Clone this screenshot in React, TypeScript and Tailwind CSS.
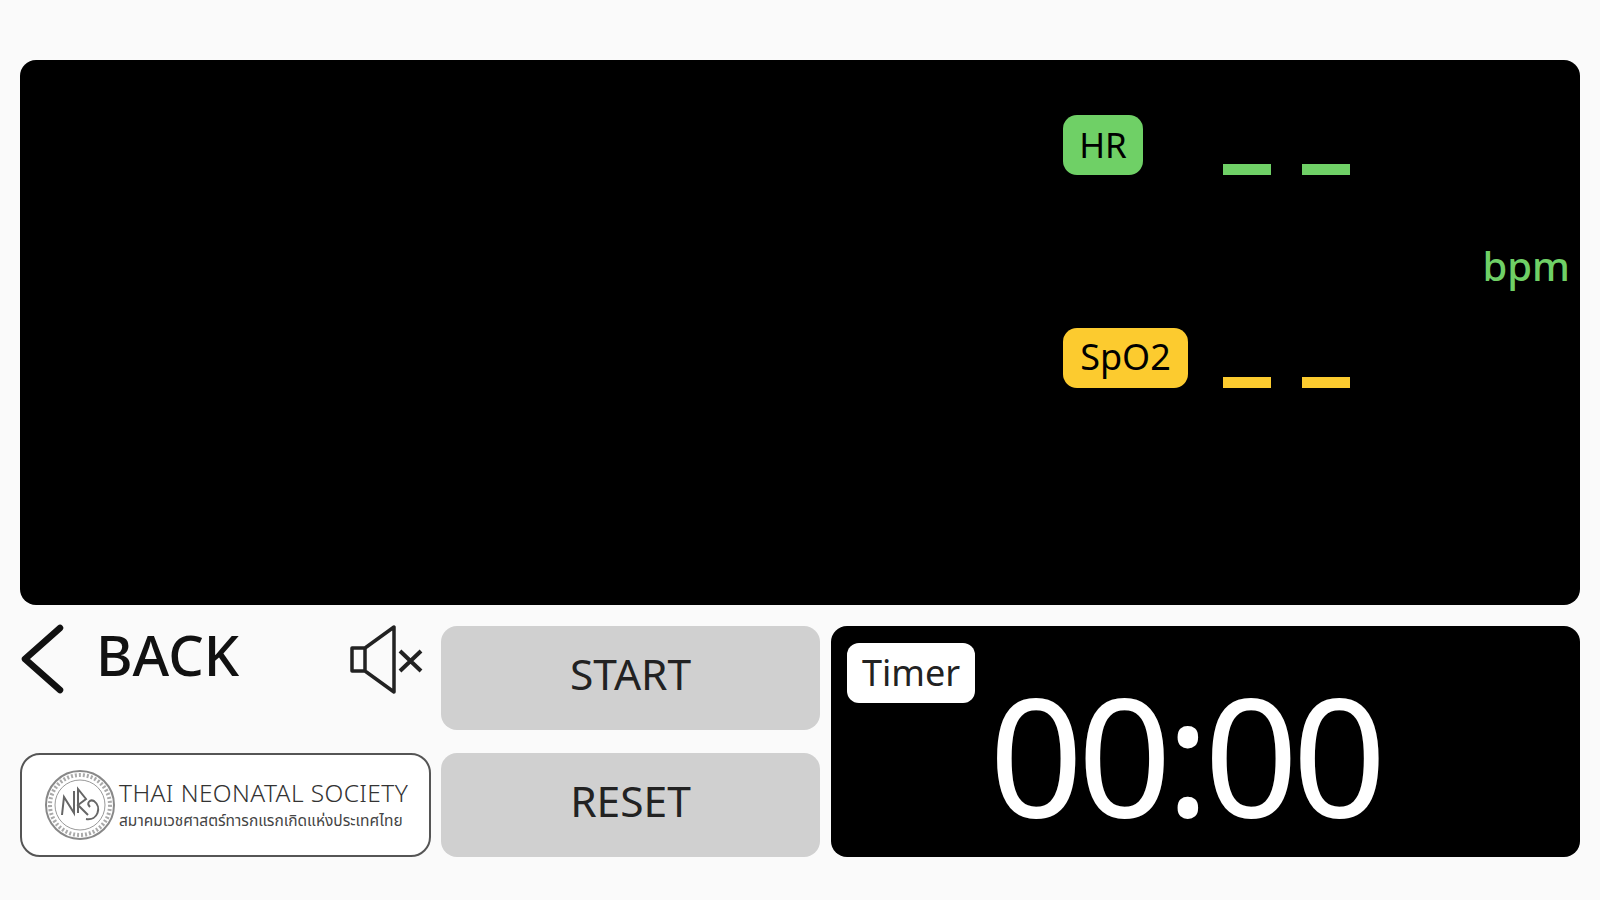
export default function App() {
  const font = { fontFamily: '"Noto Sans", "Noto Sans Thai", "Open Sans", sans-serif' };
  const Dashes = ({ c }: { c: string }) => (
    <div className="flex gap-[31px]">
      <div className={`w-[48px] h-[11px] ${c}`} />
      <div className={`w-[48px] h-[11px] ${c}`} />
    </div>
  );
  return (
    <div style={font} className="w-[1600px] h-[900px] bg-[#fafafa] px-5 pt-[60px] overflow-hidden">
      <div className="h-[545px] bg-black rounded-[16px] flex justify-end">
        <div className="w-[517px] pt-[55px] flex flex-col">
          <div className="flex items-end h-[60px]">
            <div className="w-[160px] shrink-0">
              <div className="w-[80px] h-[60px] rounded-[14px] bg-[#6fd066] text-black text-[35px] flex items-center justify-center leading-none pb-[2px]">HR</div>
            </div>
            <Dashes c="bg-[#6fd066]" />
          </div>
          <div className="h-[153px] flex items-center justify-end pr-[10px] text-[#6fd066] text-[40px] font-medium leading-none pt-[28px]">bpm</div>
          <div className="flex items-end h-[60px]">
            <div className="w-[160px] shrink-0">
              <div className="w-[125px] h-[60px] rounded-[14px] bg-[#fccb2f] text-black text-[36px] flex items-center justify-center leading-none pb-[2px]">SpO2</div>
            </div>
            <Dashes c="bg-[#fccb2f]" />
          </div>
        </div>
      </div>
      <div className="mt-[21px] h-[231px] flex gap-[10px]">
        <div className="w-[411px] flex flex-col justify-between">
          <div className="flex items-start h-[70px]">
            <svg width="46" height="72" viewBox="0 0 46 72" className="-mt-[3px] -ml-[1px] shrink-0">
              <path d="M41 5 L6 36 L41 67" fill="none" stroke="#111" strokeWidth="6.5" strokeLinecap="round" strokeLinejoin="round" />
            </svg>
            <div className="ml-[31px] text-[56px] font-medium leading-none text-[#111]">BACK</div>
            <svg width="74" height="70" viewBox="0 0 74 70" className="ml-auto mr-[7px] -mt-[1px] shrink-0">
              <path d="M2 23 H15 V46 H2 Z M15 23 L44 2 V67 L15 46" fill="none" stroke="#222" strokeWidth="3.5" strokeLinejoin="round" />
              <path d="M50 26 L71 46 M71 26 L50 46" fill="none" stroke="#222" strokeWidth="4" />
            </svg>
          </div>
          <div className="h-[104px] bg-white border-2 border-[#555] rounded-[20px] flex items-center pl-[22px] pr-[20px] gap-[3px]">
            <svg width="72" height="72" viewBox="0 0 72 72" className="shrink-0">
              <circle cx="36" cy="36" r="34" fill="none" stroke="#888" strokeWidth="2" />
              <circle cx="36" cy="36" r="30" fill="none" stroke="#aaa" strokeWidth="4" strokeDasharray="2 2" />
              <circle cx="36" cy="36" r="25" fill="none" stroke="#999" strokeWidth="1" />
              <path d="M18 46 L20 28 L30 44 L30 22 M34 44 L34 20 L42 30 L34 36 L44 46 M42 50 C54 52 58 38 50 32 C46 30 42 34 46 38" fill="none" stroke="#666" strokeWidth="2" />
            </svg>
            <div className="flex flex-col min-w-0 flex-1">
              <div className="text-[24.5px] leading-[30px] text-[#333] font-light tracking-[0.4px] whitespace-nowrap">THAI NEONATAL SOCIETY</div>
              <div className="text-[15.5px] leading-[24px] text-[#444] whitespace-nowrap">สมาคมเวชศาสตร์ทารกแรกเกิดแห่งประเทศไทย</div>
            </div>
          </div>
        </div>
        <div className="w-[379px] mr-[1px] flex flex-col justify-between">
          <div className="h-[104px] rounded-[16px] bg-[#d0d0d0] text-[#222] text-[42.5px] flex items-center justify-center leading-none pb-[8px]">START</div>
          <div className="h-[104px] rounded-[16px] bg-[#d0d0d0] text-[#222] text-[42.5px] flex items-center justify-center leading-none pb-[8px]">RESET</div>
        </div>
        <div className="flex-1 bg-black rounded-[16px] pl-[16px] pt-[17px] flex items-start">
          <div className="w-[128px] h-[60px] rounded-[12px] bg-white text-[#222] text-[36px] flex items-center justify-center leading-none shrink-0">Timer</div>
          <div className="ml-[14px] mt-[10px] text-white text-[165px] font-normal leading-[200px] tracking-[-6px] whitespace-nowrap">00:00</div>
        </div>
      </div>
    </div>
  );
}
